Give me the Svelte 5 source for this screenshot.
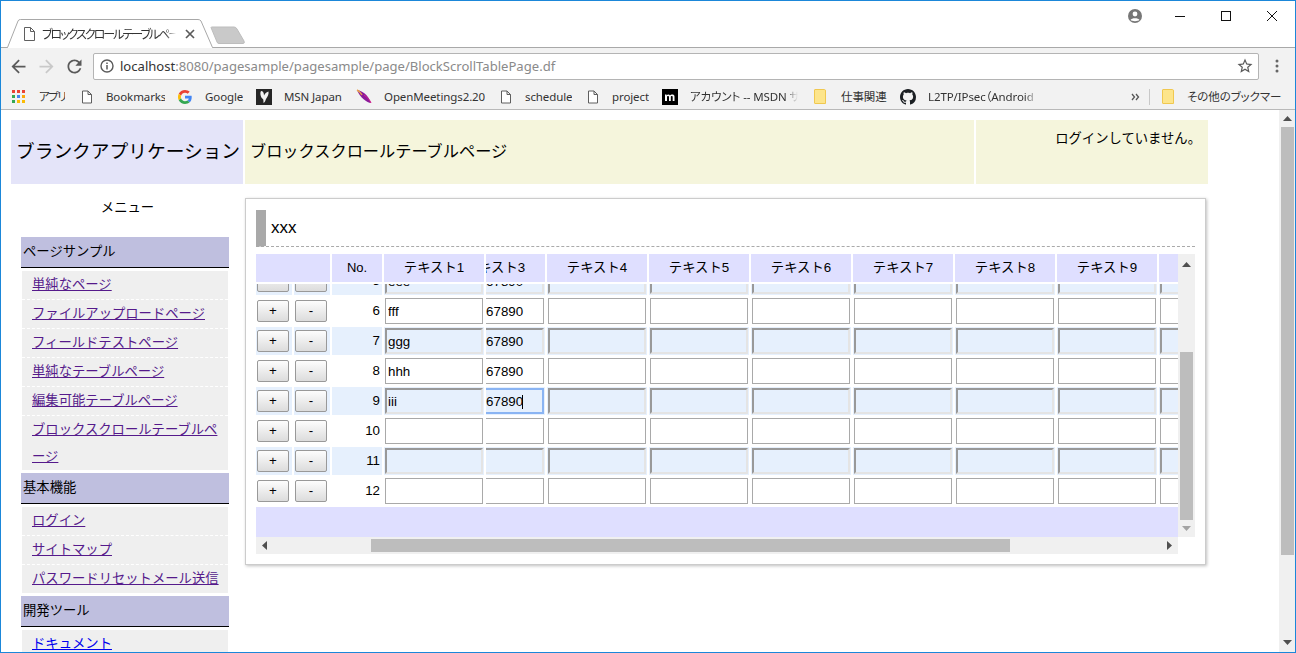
<script>
  const bookmarks = [
    { icon: 'apps', label: 'アプリ', gap: 13, w: 26, next: 16, tight: true },
    { icon: 'doc', label: 'Bookmarks', gap: 13, w: 59, next: 13 },
    { icon: 'g', label: 'Google', gap: 13, w: 38, next: 13 },
    { icon: 'msn', label: 'MSN Japan', gap: 12, w: 59, next: 13 },
    { icon: 'feather', label: 'OpenMeetings2.20', gap: 12, w: 101, next: 15 },
    { icon: 'doc', label: 'schedule', gap: 13, w: 47, next: 15 },
    { icon: 'doc', label: 'project', gap: 13, w: 37, next: 13 },
    { icon: 'm', label: 'アカウント -- MSDN サ', gap: 12, w: 108, next: 16, fade: true },
    { icon: 'folder', label: '仕事関連', gap: 15, w: 47, next: 12 },
    { icon: 'github', label: 'L2TP/IPsec（Android', gap: 12, w: 110, next: 0, fade: true }
  ];

  const groups = [
    { title: 'ページサンプル', links: ['単純なページ', 'ファイルアップロードページ', 'フィールドテストページ', '単純なテーブルページ', '編集可能テーブルページ', 'ブロックスクロールテーブルページ'] },
    { title: '基本機能', links: ['ログイン', 'サイトマップ', 'パスワードリセットメール送信'] },
    { title: '開発ツール', links: ['ドキュメント'], fresh: true }
  ];

  const rows = [
    { no: 5, name: 'eee', filled: true },
    { no: 6, name: 'fff', filled: true },
    { no: 7, name: 'ggg', filled: true },
    { no: 8, name: 'hhh', filled: true },
    { no: 9, name: 'iii', filled: true, focus: true },
    { no: 10, name: '', filled: false },
    { no: 11, name: '', filled: false },
    { no: 12, name: '', filled: false }
  ];

  const cols = [4, 5, 6, 7, 8, 9, 10];
</script>

<div class="window">
  <div class="strip">
    <div class="tab">
      <svg class="tabshape" width="206" height="29" viewBox="0 0 206 29">
        <path d="M0.5 29 L11 2 Q11.5 0.5 13.5 0.5 L191 0.5 Q193 0.5 194 2 L205.5 29 Z" fill="#fff" />
        <path d="M0.5 28.5 L11 2 Q11.5 0.5 13.5 0.5 L191 0.5 Q193 0.5 194 2 L205.5 28.5" fill="none" stroke="#a8a8a8" />
      </svg>
      <svg class="docicon" width="11" height="14" viewBox="0 0 11 14"><path d="M.5 .5H6.500L10.500 4.500V13.500H.5ZM6.500 .5V4.500H10.500" fill="#fff" stroke="#5f5f5f" /></svg>
      <span class="tabtitle">ブロックスクロールテーブルページ</span>
      <svg class="tabclose" width="10" height="10" viewBox="0 0 10 10"><path d="M1 1L9 9M9 1L1 9" stroke="#5a5a5a" stroke-width="1.7" /></svg>
    </div>
    <svg class="newtab" width="36" height="19" viewBox="0 0 36 19"><path d="M1 1.5Q1 1 2 1H24Q26 1 27 3L34 15Q35 17.5 33 17.5H9Q7.500 17.500 7 16Z" fill="#c9c9c9" stroke="#bdbdbd" /></svg>
    <div class="winctl">
      <svg class="account" width="16" height="16" viewBox="0 0 16 16">
        <circle cx="8" cy="8" r="7" fill="#777" />
        <circle cx="8" cy="6" r="2.400" fill="#fff" />
        <path d="M3.500 12C4.500 9.800 11.500 9.800 12.500 12C11 13.500 5 13.500 3.500 12Z" fill="#fff" />
      </svg>
      <span class="ctl"><svg width="12" height="12" viewBox="0 0 12 12"><path d="M1 6.500H11" stroke="#111" /></svg></span>
      <span class="ctl"><svg width="12" height="12" viewBox="0 0 12 12"><rect x="1.500" y="1.500" width="9" height="9" fill="none" stroke="#111" /></svg></span>
      <span class="ctl"><svg width="12" height="12" viewBox="0 0 12 12"><path d="M1 1L11 11M11 1L1 11" stroke="#111" /></svg></span>
    </div>
  </div>

  <div class="toolbar">
    <svg class="navicon" width="21" height="21" viewBox="0 0 24 24"><path d="M20 11H7.830l5.590-5.590L12 4l-8 8 8 8 1.410-1.410L7.830 13H20z" fill="#5a5a5a" /></svg>
    <svg class="navicon" width="21" height="21" viewBox="0 0 24 24"><path d="M4 11h12.170l-5.590-5.590L12 4l8 8-8 8-1.410-1.410L16.170 13H4z" fill="#c9c9c9" /></svg>
    <svg class="navicon" width="21" height="21" viewBox="0 0 24 24"><path d="M17.650 6.350C16.200 4.900 14.210 4 12 4c-4.420 0-7.990 3.580-7.990 8s3.570 8 7.990 8c3.730 0 6.840-2.550 7.730-6h-2.080c-.82 2.330-3.040 4-5.650 4-3.310 0-6-2.690-6-6s2.690-6 6-6c1.660 0 3.140.69 4.220 1.780L13 11h7V4l-2.350 2.350z" fill="#5a5a5a" /></svg>
    <div class="omnibox">
      <svg class="info" width="14" height="14" viewBox="0 0 14 14">
        <circle cx="7" cy="7" r="6" fill="none" stroke="#5a5a5a" stroke-width="1.400" />
        <path d="M7 6V10.500M7 3.500V5" stroke="#5a5a5a" stroke-width="1.500" />
      </svg>
      <span class="url"><span class="host">localhost</span>:8080/pagesample/pagesample/page/BlockScrollTablePage.df</span>
      <svg class="star" width="18" height="18" viewBox="0 0 24 24"><path d="M22 9.240l-7.190-.62L12 2 9.190 8.630 2 9.240l5.460 4.730L5.820 21 12 17.270 18.180 21l-1.630-7.030L22 9.240zM12 15.400l-3.760 2.270 1-4.280-3.320-2.880 4.380-.38L12 6.100l1.710 4.040 4.380.38-3.320 2.880 1 4.280L12 15.400z" fill="#5a5a5a" /></svg>
    </div>
    <svg class="dots" width="4" height="14" viewBox="0 0 4 14"><circle cx="2" cy="2" r="1.500" fill="#666" /><circle cx="2" cy="7" r="1.500" fill="#666" /><circle cx="2" cy="12" r="1.500" fill="#666" /></svg>
  </div>

  <div class="bookmarks">
    {#each bookmarks as b}
      <div class="bm" style="margin-right:{b.next}px">
        <span class="bmicon" style="margin-right:{b.gap}px">
          {#if b.icon === 'apps'}
            <svg width="14" height="14" viewBox="0 0 14 14">
              <rect x="0" y="0" width="3" height="3" fill="#ea4335" /><rect x="5" y="0" width="3" height="3" fill="#ea4335" /><rect x="10" y="0" width="3" height="3" fill="#ea4335" />
              <rect x="0" y="5" width="3" height="3" fill="#34a853" /><rect x="5" y="5" width="3" height="3" fill="#4285f4" /><rect x="10" y="5" width="3" height="3" fill="#fba90a" />
              <rect x="0" y="10" width="3" height="3" fill="#34a853" /><rect x="5" y="10" width="3" height="3" fill="#fbbc05" /><rect x="10" y="10" width="3" height="3" fill="#fbbc05" />
            </svg>
          {:else if b.icon === 'doc'}
            <svg width="12" height="14" viewBox="0 0 12 14"><path d="M1.500 1H7L10.500 4.500V13H1.500ZM7 1V4.500H10.500" fill="#fff" stroke="#5f5f5f" /></svg>
          {:else if b.icon === 'g'}
            <svg width="14" height="14" viewBox="0 0 48 48">
              <path fill="#EA4335" d="M24 9.500c3.540 0 6.710 1.220 9.210 3.600l6.850-6.850C35.900 2.380 30.470 0 24 0 14.620 0 6.510 5.380 2.560 13.220l7.980 6.190C12.430 13.720 17.740 9.500 24 9.500z" />
              <path fill="#4285F4" d="M46.980 24.550c0-1.570-.15-3.090-.38-4.550H24v9.020h12.940c-.58 2.960-2.260 5.480-4.780 7.180l7.730 6c4.510-4.180 7.090-10.360 7.090-17.650z" />
              <path fill="#FBBC05" d="M10.530 28.590c-.48-1.450-.76-2.990-.76-4.590s.27-3.140.76-4.590l-7.980-6.190C.92 16.460 0 20.120 0 24c0 3.880.92 7.540 2.560 10.780l7.970-6.190z" />
              <path fill="#34A853" d="M24 48c6.480 0 11.930-2.130 15.890-5.810l-7.730-6c-2.150 1.450-4.920 2.300-8.160 2.300-6.260 0-11.570-4.220-13.470-9.910l-7.980 6.190C6.510 42.620 14.620 48 24 48z" />
            </svg>
          {:else if b.icon === 'msn'}
            <svg width="16" height="16" viewBox="0 0 16 16">
              <rect width="16" height="16" fill="#262626" />
              <path d="M5 2C7 2 8 4 8 6.500C8.500 5.500 10 3 12.500 2.500C13 5 11.500 8 10 10C9.500 11.500 9 13 7.500 14C7.500 12.500 7.500 11 7 10C5 9.500 3.500 4 5 2Z" fill="#f2f2f2" />
            </svg>
          {:else if b.icon === 'feather'}
            <svg width="16" height="16" viewBox="0 0 16 16">
              <path d="M1 1C5 1.500 12 5 15 14C11 13.500 4 9 1 1Z" fill="#8a1a9a" />
              <path d="M1 1C3 2 5 4 6 6" stroke="#e8a04a" stroke-width="1.500" fill="none" />
              <path d="M8 6C11 8 14 11 15 14" stroke="#d8208a" fill="none" />
            </svg>
          {:else if b.icon === 'm'}
            <svg width="16" height="16" viewBox="0 0 16 16">
              <rect width="16" height="16" fill="#000" />
              <path d="M3 12V5.500H4.500V6.500C5.500 5 7.500 5 8 6.500C9 5 12.500 5 12.500 7.500V12H10.700V8C10.700 6.800 8.800 6.800 8.800 8V12H7V8C7 6.800 5 6.800 5 8V12Z" fill="#fff" />
            </svg>
          {:else if b.icon === 'folder'}
            <svg width="12" height="15" viewBox="0 0 12 15"><path d="M1 .500H10.500Q11.500 .500 11.500 2V14.500H1Q.500 14.500 .500 14V1Q.500 .500 1 .500Z" fill="#fde58b" stroke="#f0c850" /></svg>
          {:else if b.icon === 'github'}
            <svg width="16" height="16" viewBox="0 0 16 16"><path fill="#1b1f23" d="M8 0C3.580 0 0 3.580 0 8c0 3.540 2.290 6.530 5.470 7.590.4.07.55-.17.55-.38 0-.19-.01-.82-.01-1.490-2.010.37-2.530-.49-2.690-.94-.09-.23-.48-.94-.82-1.130-.28-.15-.68-.52-.01-.53.63-.01 1.080.58 1.230.82.72 1.210 1.870.87 2.330.66.07-.52.28-.87.51-1.070-1.780-.2-3.640-.89-3.640-3.950 0-.87.31-1.590.82-2.150-.08-.2-.36-1.020.08-2.120 0 0 .67-.21 2.200.82.64-.18 1.320-.27 2-.27.68 0 1.360.09 2 .27 1.530-1.040 2.200-.82 2.200-.82.44 1.100.16 1.920.08 2.120.51.56.82 1.270.82 2.150 0 3.070-1.870 3.750-3.650 3.950.29.25.54.73.54 1.480 0 1.070-.01 1.930-.01 2.200 0 .21.15.46.55.38A8.013 8.013 0 0016 8c0-4.420-3.580-8-8-8z" /></svg>
          {/if}
        </span>
        <span class="bmlabel" class:fade={b.fade} class:tight={b.tight} style="width:{b.w}px">{b.label}</span>
      </div>
    {/each}
    <svg class="chev" width="9" height="8" viewBox="0 0 9 8"><path d="M1 1L3.500 4L1 7M5 1L7.500 4L5 7" fill="none" stroke="#555" stroke-width="1.300" /></svg>
    <span class="bmsep"></span>
    <span class="bmicon other"><svg width="12" height="15" viewBox="0 0 12 15"><path d="M1 .500H10.500Q11.500 .500 11.500 2V14.500H1Q.500 14.500 .500 14V1Q.500 .500 1 .500Z" fill="#fde58b" stroke="#f0c850" /></svg></span>
    <span class="bmlabel otherlabel">その他のブックマーク</span>
  </div>

  <div class="viewport">
    <div class="page">
      <header class="pagehead">
        <div class="apptitle">ブランクアプリケーション</div>
        <div class="pagetitle">ブロックスクロールテーブルページ</div>
        <div class="loginstate">ログインしていません。</div>
      </header>

      <div class="columns">
        <nav class="sidebar">
          <div class="menutitle">メニュー</div>
          {#each groups as g}
            <div class="grouphead">{g.title}</div>
            <ul class="grouplist">
              {#each g.links as l}
                <li><a href="#top" class:fresh={g.fresh}>{l}</a></li>
              {/each}
            </ul>
          {/each}
        </nav>

        <main class="card">
          <div class="cardtitle">xxx</div>
          <div class="tablearea">
            <div class="tablemain">
              <div class="thead">
                <div class="th btncols"></div>
                <div class="th nocol">No.</div>
                <div class="th textcol">テキスト1</div>
                <div class="th clipcol"><span class="cliplabel">テキスト3</span></div>
                {#each cols as c}
                  <div class="th textcol">{c < 10 ? `テキスト${c}` : ''}</div>
                {/each}
              </div>
              <div class="tbody">
                {#each rows as r, i}
                  <div class="tr" class:odd={r.no % 2 === 1} class:first={i === 0}>
                    <div class="td btncell"><button class="rowbtn">+</button></div>
                    <div class="td btncell"><button class="rowbtn">-</button></div>
                    <div class="td nocell">{r.no}</div>
                    <div class="td inputcell"><input type="text" value={r.name} /></div>
                    <div class="td inputcell clipcell">
                      <input type="text" class:focused={r.focus} value={r.filled ? '1234567890' : ''} />
                      {#if r.focus}<span class="caret"></span>{/if}
                    </div>
                    {#each cols as c}
                      <div class="td inputcell"><input type="text" /></div>
                    {/each}
                  </div>
                {/each}
              </div>
              <div class="tfoot"></div>
            </div>
            <div class="vscroll">
              <svg class="arrow" width="9" height="5" viewBox="0 0 9 5"><path d="M4.500 0L9 5H0Z" fill="#505050" /></svg>
              <div class="vthumb"></div>
              <svg class="arrow downarrow" width="9" height="5" viewBox="0 0 9 5"><path d="M0 0H9L4.500 5Z" fill="#a3a3a3" /></svg>
            </div>
            <div class="hscroll">
              <svg class="harrow" width="5" height="9" viewBox="0 0 5 9"><path d="M5 0V9L0 4.500Z" fill="#505050" /></svg>
              <div class="hthumb"></div>
              <svg class="harrow rightarrow" width="5" height="9" viewBox="0 0 5 9"><path d="M0 0V9L5 4.500Z" fill="#505050" /></svg>
            </div>
          </div>
        </main>
      </div>
    </div>

    <div class="pagescroll">
      <svg class="parrow" width="9" height="5" viewBox="0 0 9 5"><path d="M4.500 0L9 5H0Z" fill="#505050" /></svg>
      <div class="pthumb"></div>
      <svg class="parrow pdown" width="9" height="5" viewBox="0 0 9 5"><path d="M0 0H9L4.500 5Z" fill="#505050" /></svg>
    </div>
  </div>
</div>

<style>
  :global(body) {
    margin: 0;
    background: #fff;
  }
  * {
    box-sizing: border-box;
  }
  .window {
    width: 1296px;
    height: 653px;
    border: 1px solid #1b87d9;
    display: flex;
    flex-direction: column;
    overflow: hidden;
    background: #fff;
    font-family: "Liberation Sans", "Noto Sans CJK JP", sans-serif;
    color: #000;
  }

  /* browser chrome */
  .strip {
    height: 47px;
    flex: none;
    display: flex;
    align-items: flex-start;
    border-bottom: 1px solid #a9a9a9;
    background: #fff;
  }
  .tab {
    position: relative;
    width: 206px;
    height: 29px;
    margin: 18px 0 0 6px;
    display: flex;
    align-items: center;
    padding: 0 0 0 17px;
    z-index: 1;
  }
  .tabshape {
    position: absolute;
    left: 0;
    top: 0;
  }
  .docicon,
  .tabtitle,
  .tabclose {
    position: relative;
  }
  .tabtitle {
    width: 134px;
    margin-left: 7px;
    font-family: "Noto Sans CJK JP", sans-serif;
    font-size: 12px;
    font-feature-settings: "palt";
    letter-spacing: -2px;
    white-space: nowrap;
    overflow: hidden;
    color: #333;
    -webkit-mask-image: linear-gradient(to right, #000 92%, transparent);
    mask-image: linear-gradient(to right, #000 92%, transparent);
  }
  .tabclose {
    margin-left: 9px;
  }
  .newtab {
    margin: 25px 0 0 -3px;
  }
  .winctl {
    margin-left: auto;
    display: flex;
    align-items: center;
    height: 30px;
  }
  .account {
    margin-right: 14px;
  }
  .ctl {
    width: 45px;
    display: flex;
    justify-content: center;
    margin-right: 1px;
  }
  .ctl:last-child {
    margin-right: 1px;
  }

  .toolbar {
    height: 36px;
    flex: none;
    background: #f2f2f2;
    display: flex;
    align-items: center;
    padding: 0 0 0 7px;
    position: relative;
  }
  .navicon {
    margin-right: 7px;
  }
  .omnibox {
    width: 1166px;
    height: 27px;
    margin-left: 1px;
    background: #fff;
    border: 1px solid #b4b4b4;
    border-radius: 2px;
    display: flex;
    align-items: center;
    padding: 0 4px 0 6px;
  }
  .url {
    margin-left: 6px;
    font-family: "Noto Sans", sans-serif;
    font-size: 13.080px;
    color: #8a8a8a;
    white-space: nowrap;
  }
  .host {
    color: #333;
  }
  .star {
    margin-left: auto;
  }
  .dots {
    margin-left: 16px;
  }

  .bookmarks {
    height: 26px;
    flex: none;
    background: #f2f2f2;
    border-bottom: 1px solid #b9b9b9;
    display: flex;
    align-items: center;
    padding-left: 11px;
  }
  .bm {
    display: flex;
    align-items: center;
  }
  .bmicon {
    display: flex;
    align-items: center;
  }
  .bmlabel {
    display: block;
    font-family: "Noto Sans", "Noto Sans CJK JP", sans-serif;
    font-size: 11.500px;
    font-feature-settings: "palt";
    letter-spacing: -0.1px;
    color: #333;
    white-space: nowrap;
    overflow: hidden;
    line-height: 16px;
  }
  .bmlabel.tight {
    letter-spacing: -1.500px;
  }
  .fade {
    -webkit-mask-image: linear-gradient(to right, #000 88%, transparent);
    mask-image: linear-gradient(to right, #000 88%, transparent);
  }
  .chev {
    margin-left: 93px;
  }
  .bmsep {
    width: 1px;
    height: 16px;
    background: #c8c8c8;
    margin-left: 9px;
  }
  .other {
    margin-left: 12px;
    margin-right: 13px;
  }
  .otherlabel {
    width: 95px;
  }

  /* page */
  .viewport {
    flex: 1;
    min-height: 0;
    display: flex;
  }
  .page {
    flex: 1;
    min-width: 0;
    overflow: hidden;
    padding: 10px 0 0 10px;
    font-size: 13.330px;
  }
  .pagehead {
    width: 1197px;
    height: 64px;
    display: grid;
    grid-template-columns: 232px 729px 232px;
    column-gap: 2px;
  }
  .apptitle {
    background: #e4e4f9;
    font-size: 18.720px;
    display: flex;
    align-items: center;
    padding: 0 0 6px 5px;
    white-space: nowrap;
  }
  .pagetitle {
    background: #f5f5dc;
    font-size: 16.200px;
    display: flex;
    align-items: center;
    padding: 0 0 4px 5px;
  }
  .loginstate {
    background: #f5f5dc;
    font-size: 13.330px;
    text-align: right;
    padding: 10px 7px 0 0;
    line-height: 18px;
  }
  .columns {
    display: flex;
    align-items: flex-start;
  }
  .sidebar {
    width: 234px;
    flex: none;
    padding: 14px 16px 0 10px;
  }
  .menutitle {
    text-align: center;
    height: 39px;
    line-height: 18px;
    font-size: 13.330px;
    padding: 1px 0 0 5px;
  }
  .grouphead {
    height: 31px;
    background: #bfbfdf;
    border-bottom: 1px solid #000;
    padding: 5px 0 0 2px;
    line-height: 19px;
    white-space: nowrap;
  }
  .grouplist {
    list-style: none;
    margin: 3px 1px;
    padding: 0;
    background: #efefef;
  }
  .grouplist li {
    padding: 0 8px 1px 10px;
    line-height: 27px;
    border-bottom: 1px dashed #fff;
  }
  .grouplist li:last-child {
    border-bottom: none;
  }
  .grouplist:first-of-type li:last-child {
    padding-bottom: 0;
  }
  .grouplist a {
    color: #551a8b;
    text-decoration: underline;
  }
  .grouplist a.fresh {
    color: #0000ee;
  }

  .card {
    width: 961px;
    height: 367px;
    flex: none;
    margin: 14px 0 0 0;
    border: 1px solid #ccc;
    box-shadow: 1px 1px 3px rgba(0, 0, 0, 0.25);
    padding: 11px 10px 0;
    background: #fff;
  }
  .cardtitle {
    height: 37px;
    border-left: 10px solid #a9a9a9;
    border-bottom: 1px dashed #aaa;
    font-size: 17px;
    padding-left: 5px;
    line-height: 36px;
  }
  .tablearea {
    margin-top: 7px;
    display: grid;
    grid-template-columns: 922px 17px;
    grid-template-rows: 283px 17px;
  }
  .tablemain {
    display: flex;
    flex-direction: column;
    row-gap: 2px;
    overflow: hidden;
    min-width: 0;
  }
  .thead {
    height: 28px;
    flex: none;
    display: flex;
    column-gap: 2px;
  }
  .th {
    flex: none;
    background: #dfdfff;
    display: flex;
    align-items: center;
    justify-content: center;
    font-size: 13.330px;
    overflow: hidden;
    white-space: nowrap;
    padding-bottom: 4px;
  }
  .btncols {
    width: 74px;
  }
  .nocol {
    width: 50px;
    font-size: 13px;
    padding-bottom: 2px;
  }
  .textcol {
    width: 100px;
  }
  .clipcol {
    width: 59px;
    justify-content: flex-end;
  }
  .cliplabel {
    flex: none;
    width: 100px;
    margin-right: 0;
    text-align: center;
  }
  .tbody {
    height: 221px;
    flex: none;
    overflow: hidden;
    display: flex;
    flex-direction: column;
    row-gap: 2px;
  }
  .tr {
    height: 28px;
    flex: none;
    display: flex;
    column-gap: 2px;
  }
  .first {
    margin-top: -17px;
  }
  .td {
    flex: none;
    height: 28px;
  }
  .odd .td {
    background: #e6f0fd;
  }
  .btncell {
    width: 36px;
    padding: 3px 0 0 1px;
  }
  .rowbtn {
    display: block;
    width: 32px;
    height: 22px;
    padding: 0;
    border: 1px solid #999;
    border-radius: 2px;
    background: linear-gradient(#fdfdfd, #dcdcdc);
    font-family: inherit;
    font-size: 13.330px;
    line-height: 18px;
    color: #000;
  }
  .nocell {
    width: 50px;
    text-align: right;
    padding-right: 2px;
    line-height: 27px;
  }
  .inputcell {
    width: 100px;
    padding: 1px;
    overflow: hidden;
    position: relative;
  }
  .clipcell {
    width: 59px;
    padding: 1px 1px 1px 0;
    display: flex;
    justify-content: flex-end;
  }
  .inputcell input {
    display: block;
    flex: none;
    width: 98px;
    height: 26px;
    margin: 0;
    padding: 0 1px 0 2px;
    border: 1px solid #a9a9a9;
    border-radius: 0;
    background: transparent;
    outline: none;
    font-family: inherit;
    font-size: 13.330px;
    color: #000;
  }
  .odd .inputcell input {
    border-width: 2px;
    border-style: solid;
    border-color: #999 #e4e4e4 #e4e4e4 #999;
    padding-left: 1px;
  }
  .odd .inputcell input.focused {
    border: 2px solid #8ab4f3;
  }
  .caret {
    position: absolute;
    left: 36px;
    top: 8px;
    width: 1px;
    height: 14px;
    background: #000;
  }
  .tfoot {
    height: 30px;
    flex: none;
    background: #dfdfff;
  }
  .vscroll {
    background: #f0f0f0;
    display: flex;
    flex-direction: column;
    align-items: center;
    padding: 8px 0 6px;
  }
  .arrow {
    flex: none;
  }
  .vthumb {
    width: 13px;
    height: 168px;
    background: #bdbdbd;
    margin-top: 85px;
  }
  .downarrow {
    margin-top: auto;
  }
  .hscroll {
    background: #f0f0f0;
    display: flex;
    align-items: center;
    padding: 0 6px;
  }
  .harrow {
    flex: none;
  }
  .hthumb {
    width: 639px;
    height: 13px;
    background: #bdbdbd;
    margin-left: 104px;
  }
  .rightarrow {
    margin-left: auto;
  }

  .pagescroll {
    width: 16px;
    flex: none;
    background: #f0f0f0;
    display: flex;
    flex-direction: column;
    align-items: center;
    padding: 6px 0 7px;
    position: relative;
  }
  .pthumb {
    width: 13px;
    height: 428px;
    background: #bdbdbd;
    margin-top: 6px;
  }
  .pdown {
    margin-top: auto;
  }
</style>
